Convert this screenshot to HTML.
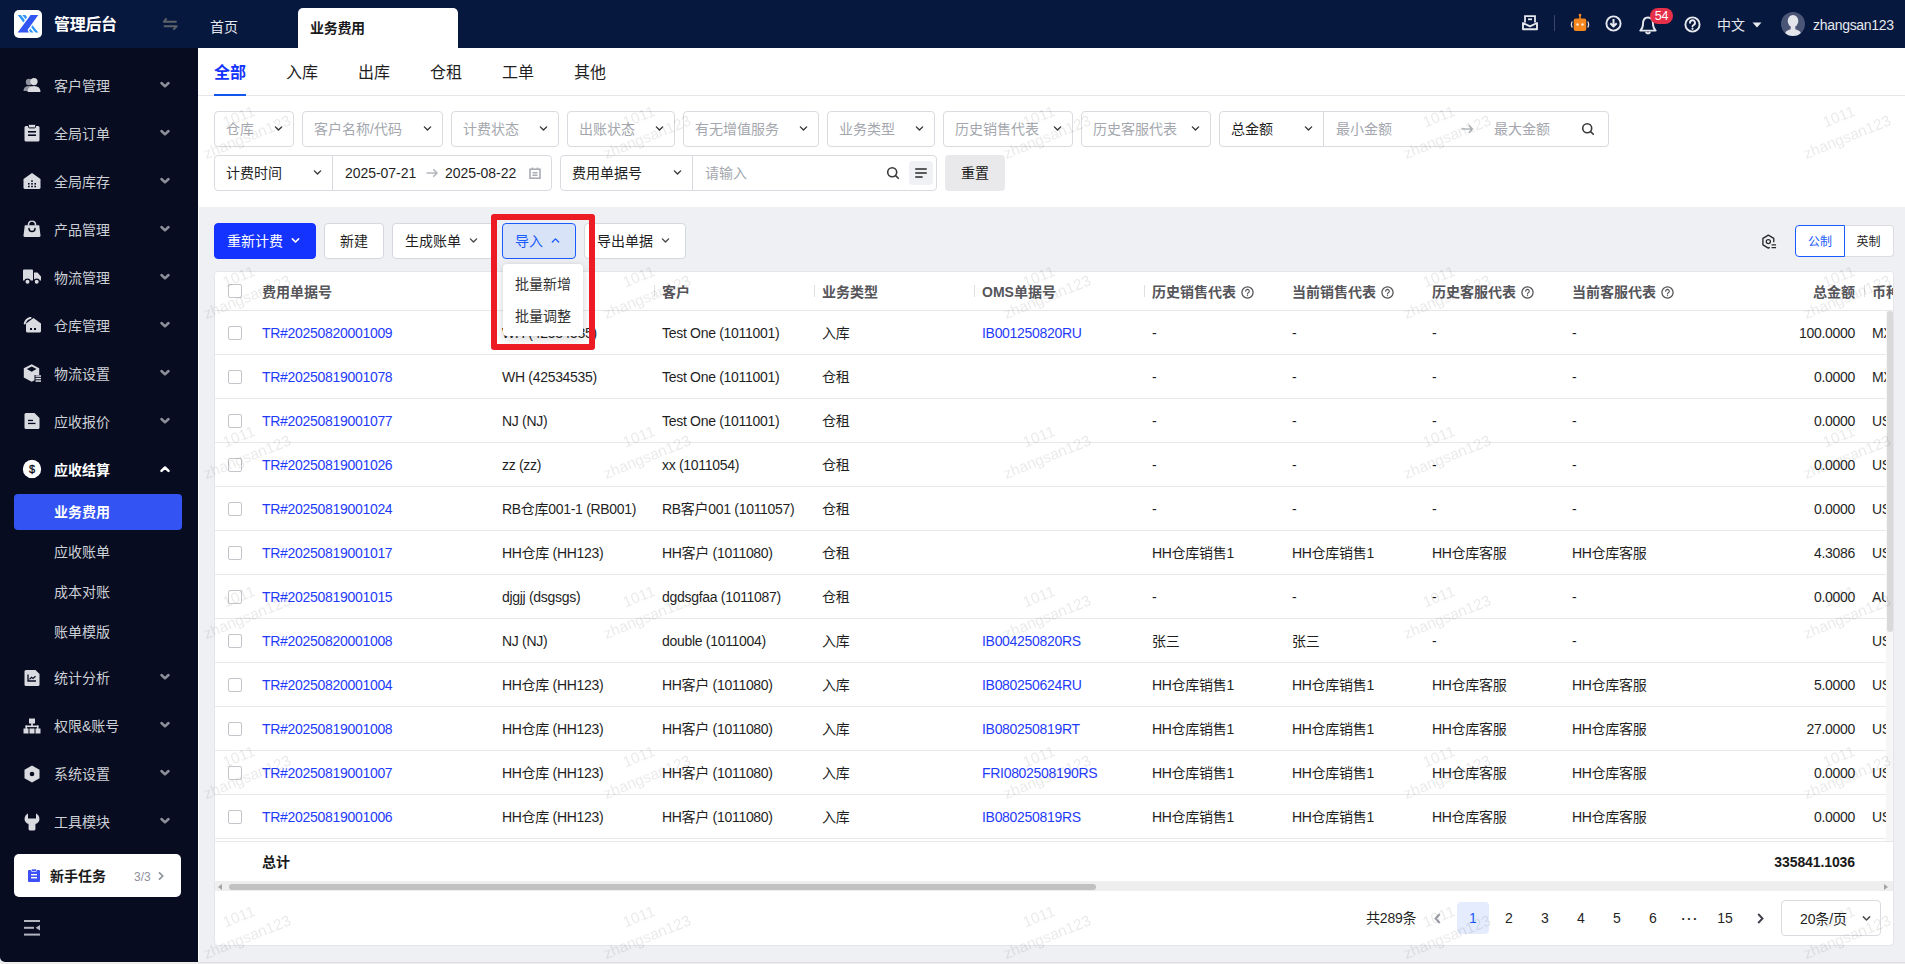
<!DOCTYPE html>
<html lang="zh-CN"><head><meta charset="utf-8"><title>业务费用 - 管理后台</title>
<style>
*{box-sizing:border-box;margin:0;padding:0}
html,body{width:1905px;height:964px;overflow:hidden}
body{position:relative;background:#eff0f4;font-family:"Liberation Sans","Noto Sans CJK SC",sans-serif;font-size:14px;color:#1f1f1f;line-height:1}
.abs{position:absolute}
svg{display:block}
/* header */
#hd{position:absolute;left:0;top:0;width:1905px;height:48px;background:#07183e}
#logo{position:absolute;left:14px;top:10px;width:28px;height:28px;background:#fff;border-radius:5px}
#brand{position:absolute;left:54px;top:15px;font-size:16px;font-weight:bold;color:#fff;line-height:20px;letter-spacing:-0.300px}
.htab{position:absolute;top:16px;height:22px;line-height:22px;font-size:14px;color:#e6e8ee}
#tabact{position:absolute;left:298px;top:8px;width:160px;height:40px;background:#fff;border-radius:5px 5px 0 0}
#tabact span{position:absolute;left:12px;top:9px;line-height:22px;font-weight:bold;color:#1a1a1a;font-size:14px;letter-spacing:-0.300px}
/* sidebar */
#sb{position:absolute;left:0;top:48px;width:198px;height:914px;background:#070c20;border-bottom-left-radius:5px}
.mi{position:absolute;left:0;width:198px;height:24px}
.mi .ic{position:absolute;left:32px;top:11.500px;transform:translate(-50%,-50%)}
.mi .tx{position:absolute;left:54px;top:0;line-height:24px;font-size:14px;color:#cdd0d6;white-space:nowrap}
.mi.on .tx{color:#fff;font-weight:bold}
.mi .ar{position:absolute;left:160px;top:7px}
.smi{position:absolute;left:54px;line-height:24px;height:24px;font-size:14px;color:#cdd0d6}
#smact{position:absolute;left:14px;top:446px;width:168px;height:36px;background:#3353f3;border-radius:4px}
#smact span{position:absolute;left:40px;top:6px;line-height:24px;color:#fff;font-weight:bold;font-size:14px}
#task{position:absolute;left:14px;top:806px;width:167px;height:43px;background:#fff;border-radius:5px}
/* main */
#top{position:absolute;left:198px;top:48px;width:1707px;height:159px;background:#fff}
#tabline{position:absolute;left:0;top:47px;width:1707px;height:1px;background:#e6e7eb}
.stab{position:absolute;top:13px;font-size:16px;line-height:24px;color:#1f1f1f}
.stab.on{color:#1433ff;font-weight:bold}
#ink{position:absolute;left:16px;top:46px;width:32px;height:2px;background:#1456f0}
.sel{position:absolute;height:36px;border:1px solid #d9dbe0;border-radius:4px;background:#fff}
.sel .ph{position:absolute;left:11px;top:0;line-height:34px;color:#a4a7ae;white-space:nowrap;font-size:14px}
.sel .val{position:absolute;left:11px;top:0;line-height:34px;color:#1f1f1f;white-space:nowrap;font-size:14px}
.sel .chev{position:absolute;right:10px;top:12px;color:#333;width:9px;height:9px;margin:0 0.500px}
.btn{position:absolute;height:36px;border:1px solid #d5d8de;border-radius:4px;background:#fff;line-height:34px;font-size:14px;color:#1f1f1f;white-space:nowrap;padding-left:12px}
.btn .chev{position:absolute;top:12px;color:#444;width:9px;height:9px;margin:0 0.500px}
/* table */
#card{position:absolute;left:214px;top:271px;width:1680px;height:675px;background:#fff;border:1px solid #e4e5e9;border-radius:4px;overflow:hidden}
#thd{position:absolute;left:0;top:0;width:1678px;height:39px;overflow:hidden;border-bottom:1px solid #e8e8ec;background:#fff}
#tbl{position:absolute;left:0;top:39px;width:1671px;height:530px;overflow:hidden}
.th{position:absolute;top:0;height:39px;line-height:40px;font-weight:bold;color:#55555a;white-space:nowrap;font-size:14px}
.th .qi{display:inline-block;vertical-align:-2px;margin-left:5px}
.vd{position:absolute;top:13px;width:1px;height:12px;background:#dddee2}
.tr{position:absolute;left:0;width:1671px;height:44px;border-bottom:1px solid #e8e8ec}
.td{position:absolute;top:0;line-height:44px;white-space:nowrap;letter-spacing:-0.300px;color:#1f1f1f}
.td.lk{color:#1f3bfa}
.cb{position:absolute;left:13px;width:14px;height:14px;border:1px solid #c3c5cb;border-radius:2px;background:#fff}
.pg{position:absolute;top:630px;width:32px;height:32px;line-height:32px;text-align:center;font-size:14px;color:#1f1f1f;border-radius:4px}
/* watermark */
#wmk{position:absolute;left:0;top:0;width:1905px;height:964px;overflow:hidden;pointer-events:none;will-change:transform}
.wm{position:absolute;width:160px;height:44px;margin-left:-80px;margin-top:-22px;text-align:center;font-size:15.400px;line-height:22px;color:rgba(0,0,0,0.088);transform:rotate(-22deg);white-space:nowrap;pointer-events:none}
</style></head><body>

<div id="hd">
<div id="logo"><svg width="28" height="28" viewBox="0 0 28 28"><path d="M16.600 5.100 H24.300 L13.500 19.900 L14.900 22.600 H3.700 Z" fill="#3355f3"/><path d="M3.750 5.100 H6.900 L10.900 10.300 L9.400 12.400 Z M8.300 5.100 H11.400 L13.100 7.300 L11.600 9.200 Z M18.500 15.300 L24.300 22.600 H21.300 L17.200 17.300 Z M16.400 18.700 L19.500 22.600 H16.600 L15 20.600 Z" fill="#2f95fb"/></svg></div>
<div id="brand">管理后台</div>
<svg class="abs" style="left:162px;top:16px" width="17" height="16" viewBox="0 0 17 16"><path d="M14.700 5.800 H1.800 L4.600 2.300" fill="none" stroke="#5d6169" stroke-width="2" stroke-linejoin="round"/><path d="M1.800 10.300 H14.700 L11.300 13.600" fill="none" stroke="#5d6169" stroke-width="2" stroke-linejoin="round"/></svg>
<div class="htab" style="left:210px">首页</div>
<div id="tabact"><span>业务费用</span></div>
<svg class="abs" style="left:1521px;top:14px" width="18" height="18" viewBox="0 0 18 18"><path d="M4 8.500 V2.200 H14 V8.500" fill="none" stroke="#e6e8ee" stroke-width="1.800"/><path d="M7 5.300 H11" stroke="#e6e8ee" stroke-width="1.800"/><path d="M2 9 V15.300 H16 V9 L9 12.300 Z" fill="none" stroke="#e6e8ee" stroke-width="1.900" stroke-linejoin="round"/></svg>
<div class="abs" style="left:1554px;top:15px;width:1px;height:16px;background:#3a4665"></div>
<svg class="abs" style="left:1570px;top:13px" width="20" height="19" viewBox="0 0 20 19"><rect x="9.200" y="1.500" width="1.600" height="4.500" fill="#f5871f"/><circle cx="10" cy="2" r="1.300" fill="#f5871f"/><rect x="3.700" y="5.500" width="12.600" height="12.500" rx="2" fill="#f5871f"/><path d="M2.300 8.500 Q0.500 11.500 2.300 14.500 M17.700 8.500 Q19.500 11.500 17.700 14.500" fill="none" stroke="#e9e2dc" stroke-width="1.300"/><circle cx="7.500" cy="11.500" r="1.200" fill="#f7ede2"/><circle cx="12.500" cy="11.500" r="1.200" fill="#f7ede2"/></svg>
<svg class="abs" style="left:1605px;top:15px" width="17" height="17" viewBox="0 0 17 17"><circle cx="8.500" cy="8.500" r="7.100" fill="none" stroke="#e6e8ee" stroke-width="1.900"/><path d="M8.500 4 V11 M5.300 8.300 L8.500 11.500 L11.700 8.300" fill="none" stroke="#e6e8ee" stroke-width="2" stroke-linejoin="round"/></svg>
<svg class="abs" style="left:1639px;top:16px" width="18" height="19" viewBox="0 0 18 19"><path d="M9 1.500 C5 1.500 4 5 4 8 C4 11 3 13 1.300 14.600 H16.700 C15 13 14 11 14 8 C14 5 13 1.500 9 1.500 Z" fill="none" stroke="#e6e8ee" stroke-width="1.900" stroke-linejoin="round"/><path d="M7.200 16.500 Q9 18.300 10.800 16.500" fill="none" stroke="#e6e8ee" stroke-width="1.800" stroke-linecap="round"/></svg>
<div class="abs" style="left:1650px;top:8px;width:23px;height:16px;border-radius:8px;background:#e6304a;color:#fff;font-size:12.500px;line-height:16px;text-align:center;letter-spacing:-0.300px">54</div>
<svg class="abs" style="left:1684px;top:16px" width="17" height="17" viewBox="0 0 17 17"><circle cx="8.500" cy="8.500" r="7.100" fill="none" stroke="#e6e8ee" stroke-width="1.900"/><path d="M6 6.800 a2.500 2.500 0 1 1 3.600 2.200 q-1.100 0.600 -1.100 1.600" fill="none" stroke="#e6e8ee" stroke-width="1.900" stroke-linecap="round"/><circle cx="8.500" cy="12.800" r="1.100" fill="#e6e8ee"/></svg>
<div class="abs" style="left:1717px;top:14px;line-height:22px;color:#e6e8ee;font-size:14px">中文</div>
<svg class="abs" style="left:1752px;top:22px" width="10" height="6" viewBox="0 0 10 6"><path d="M0.500 0.500 H9.500 L5 5.500 Z" fill="#e6e8ee"/></svg>
<svg class="abs" style="left:1781px;top:12px" width="24" height="24" viewBox="0 0 24 24"><defs><clipPath id="avc"><circle cx="12" cy="12" r="12"/></clipPath></defs><circle cx="12" cy="12" r="12" fill="#4b5677"/><g clip-path="url(#avc)"><ellipse cx="12" cy="9" rx="5.300" ry="6" fill="#e3e5ea"/><rect x="9.700" y="13" width="4.600" height="6" fill="#e3e5ea"/><path d="M3.500 24 Q3.500 18.600 9.700 17.300 L14.300 17.300 Q20.500 18.600 20.500 24 Z" fill="#e3e5ea"/></g></svg>
<div class="abs" style="left:1813px;top:14px;line-height:22px;color:#e6e8ee;font-size:14px;letter-spacing:-0.300px">zhangsan123</div>
</div>
<div id="sb">
<div class="mi" style="top:25.5px"><div class="ic"><svg width="18" height="16" viewBox="0 0 18 16"><circle cx="6" cy="5" r="3.2" fill="#8f939d"/><path d="M0.5 14 q0 -5 5.5 -5 q5.5 0 5.5 5 z" fill="#8f939d"/><circle cx="11" cy="4.6" r="3.6" fill="#d9dbe0"/><path d="M4.5 15 q0 -6 6.5 -6 q6.500 0 6.500 6 z" fill="#d9dbe0"/></svg></div><div class="tx">客户管理</div><div class="ar"><svg width="10" height="8" viewBox="0 0 10 8"><path d="M1.500 2 L5 5.300 L8.500 2" fill="none" stroke="#8d909b" stroke-width="2.500" stroke-linecap="round" stroke-linejoin="round"/></svg></div></div>
<div class="mi" style="top:73.5px"><div class="ic"><svg width="16" height="18" viewBox="0 0 16 18"><rect x="0.500" y="2" width="15" height="15.5" rx="1.5" fill="#d9dbe0"/><rect x="4.5" y="0.3" width="7" height="3.6" rx="1" fill="#d9dbe0" stroke="#070c20" stroke-width="1"/><rect x="4" y="7" width="8" height="1.6" fill="#070c20"/><rect x="4" y="10.400" width="8" height="1.6" fill="#070c20"/></svg></div><div class="tx">全局订单</div><div class="ar"><svg width="10" height="8" viewBox="0 0 10 8"><path d="M1.500 2 L5 5.300 L8.500 2" fill="none" stroke="#8d909b" stroke-width="2.500" stroke-linecap="round" stroke-linejoin="round"/></svg></div></div>
<div class="mi" style="top:121.5px"><div class="ic"><svg width="18" height="17" viewBox="0 0 18 17"><path d="M9 0.5 L17.500 6.5 V15 q0 1.5 -1.5 1.5 H2 q-1.5 0 -1.5 -1.5 V6.5 Z" fill="#d9dbe0"/><g fill="#070c20"><rect x="5" y="10.5" width="1.6" height="1.6"/><rect x="8.2" y="10.5" width="1.6" height="1.6"/><rect x="11.4" y="10.5" width="1.6" height="1.6"/><rect x="5" y="13.2" width="1.6" height="1.6"/><rect x="8.2" y="13.2" width="1.6" height="1.6"/><rect x="11.4" y="13.2" width="1.6" height="1.6"/><rect x="8.2" y="7.800" width="1.6" height="1.6"/></g></svg></div><div class="tx">全局库存</div><div class="ar"><svg width="10" height="8" viewBox="0 0 10 8"><path d="M1.500 2 L5 5.300 L8.500 2" fill="none" stroke="#8d909b" stroke-width="2.500" stroke-linecap="round" stroke-linejoin="round"/></svg></div></div>
<div class="mi" style="top:169.5px"><div class="ic"><svg width="18" height="17" viewBox="0 0 18 17"><path d="M5.500 5 V4 a3.500 3.500 0 0 1 7 0 V5" fill="none" stroke="#d9dbe0" stroke-width="1.6"/><path d="M1.800 4.800 H16.200 L17.500 15 q0.100 1.500 -1.400 1.500 H1.900 q-1.500 0 -1.400 -1.500 Z" fill="#d9dbe0"/><path d="M6 8 a3 3 0 0 0 6 0" fill="none" stroke="#070c20" stroke-width="1.500" stroke-linecap="round"/></svg></div><div class="tx">产品管理</div><div class="ar"><svg width="10" height="8" viewBox="0 0 10 8"><path d="M1.500 2 L5 5.300 L8.500 2" fill="none" stroke="#8d909b" stroke-width="2.500" stroke-linecap="round" stroke-linejoin="round"/></svg></div></div>
<div class="mi" style="top:217.5px"><div class="ic"><svg width="19" height="16" viewBox="0 0 19 16"><path d="M0.500 1.500 q0 -1 1 -1 H9.500 q1 0 1 1 V11.500 H0.500 Z" fill="#d9dbe0"/><path d="M11.500 3.500 H15 L18.500 7.500 V11.500 H11.500 Z" fill="#d9dbe0"/><circle cx="5" cy="12.800" r="2.600" fill="#d9dbe0" stroke="#070c20" stroke-width="1.200"/><circle cx="14.200" cy="12.800" r="2.600" fill="#d9dbe0" stroke="#070c20" stroke-width="1.200"/></svg></div><div class="tx">物流管理</div><div class="ar"><svg width="10" height="8" viewBox="0 0 10 8"><path d="M1.500 2 L5 5.300 L8.500 2" fill="none" stroke="#8d909b" stroke-width="2.500" stroke-linecap="round" stroke-linejoin="round"/></svg></div></div>
<div class="mi" style="top:265.5px"><div class="ic"><svg width="19" height="16" viewBox="0 0 19 16"><path d="M2.200 6.500 A 8 8 0 0 1 8 0.800" fill="none" stroke="#d9dbe0" stroke-width="2" stroke-linecap="round"/><path d="M11 1 L18.500 6.500 V14 q0 1.500 -1.500 1.500 H5 q-1.500 0 -1.500 -1.500 V6.500 Z" fill="#d9dbe0"/><rect x="7.500" y="11" width="2" height="2" fill="#070c20"/><rect x="11.500" y="11" width="2" height="2" fill="#070c20"/></svg></div><div class="tx">仓库管理</div><div class="ar"><svg width="10" height="8" viewBox="0 0 10 8"><path d="M1.500 2 L5 5.300 L8.500 2" fill="none" stroke="#8d909b" stroke-width="2.500" stroke-linecap="round" stroke-linejoin="round"/></svg></div></div>
<div class="mi" style="top:313.5px"><div class="ic"><svg width="18" height="18" viewBox="0 0 18 18"><path d="M8.700 0.300 L16.200 4.300 V11 H11.500 V16.300 L8.700 17.700 L0.800 13.500 V4.300 Z" fill="#d9dbe0"/><path d="M8.700 2.600 L13.500 5.100 L8.700 7.700 L3.900 5.100 Z" fill="#070c20"/><rect x="12.500" y="11.300" width="5.500" height="1.500" fill="#d9dbe0"/><rect x="12.500" y="13.800" width="5.500" height="1.500" fill="#d9dbe0"/><rect x="12.500" y="16.300" width="5.500" height="1.500" fill="#d9dbe0"/></svg></div><div class="tx">物流设置</div><div class="ar"><svg width="10" height="8" viewBox="0 0 10 8"><path d="M1.500 2 L5 5.300 L8.500 2" fill="none" stroke="#8d909b" stroke-width="2.500" stroke-linecap="round" stroke-linejoin="round"/></svg></div></div>
<div class="mi" style="top:361.5px"><div class="ic"><svg width="16" height="17" viewBox="0 0 16 17"><path d="M2 0.500 H10.500 L15.500 5.500 V15 q0 1.500 -1.500 1.500 H2 q-1.500 0 -1.500 -1.500 V2 q0 -1.500 1.500 -1.500 Z" fill="#d9dbe0"/><rect x="4" y="7.300" width="5" height="1.300" fill="#070c20"/><rect x="4" y="10.300" width="7.500" height="1.300" fill="#070c20"/></svg></div><div class="tx">应收报价</div><div class="ar"><svg width="10" height="8" viewBox="0 0 10 8"><path d="M1.500 2 L5 5.300 L8.500 2" fill="none" stroke="#8d909b" stroke-width="2.500" stroke-linecap="round" stroke-linejoin="round"/></svg></div></div>
<div class="mi on" style="top:409.5px"><div class="ic"><svg width="19" height="19" viewBox="0 0 19 19"><circle cx="9.500" cy="9.500" r="9.200" fill="#fff"/><text x="9.500" y="13.300" font-size="11" text-anchor="middle" fill="#070c20" stroke="#070c20" stroke-width="0.300" font-family="Liberation Sans, sans-serif">$</text></svg></div><div class="tx">应收结算</div><div class="ar"><svg width="10" height="8" viewBox="0 0 10 8"><path d="M1.500 5.800 L5 2.500 L8.500 5.800" fill="none" stroke="#fff" stroke-width="2.500" stroke-linecap="round" stroke-linejoin="round"/></svg></div></div>
<div class="mi" style="top:618px"><div class="ic"><svg width="16" height="17" viewBox="0 0 16 17"><path d="M2 0.500 H11.500 L15.500 4.500 V15 q0 1.500 -1.500 1.500 H2 q-1.500 0 -1.500 -1.500 V2 q0 -1.500 1.500 -1.500 Z" fill="#d9dbe0"/><path d="M4 5 V11.500 H12" fill="none" stroke="#070c20" stroke-width="1.300"/><path d="M5.500 9.800 L7.500 7.800 L9 9 L11.500 6.800" fill="none" stroke="#070c20" stroke-width="1.200"/></svg></div><div class="tx">统计分析</div><div class="ar"><svg width="10" height="8" viewBox="0 0 10 8"><path d="M1.500 2 L5 5.300 L8.500 2" fill="none" stroke="#8d909b" stroke-width="2.500" stroke-linecap="round" stroke-linejoin="round"/></svg></div></div>
<div class="mi" style="top:666px"><div class="ic"><svg width="18" height="16" viewBox="0 0 18 16"><rect x="6" y="0.500" width="6" height="5" fill="#d9dbe0"/><rect x="8.200" y="5" width="1.600" height="4" fill="#d9dbe0"/><rect x="2.500" y="7.500" width="13" height="1.600" fill="#d9dbe0"/><rect x="2.500" y="7.500" width="1.600" height="3.500" fill="#d9dbe0"/><rect x="13.900" y="7.500" width="1.600" height="3.500" fill="#d9dbe0"/><rect x="0.500" y="10.500" width="5" height="5" fill="#d9dbe0"/><rect x="6.500" y="10.500" width="5" height="5" fill="#d9dbe0"/><rect x="12.500" y="10.500" width="5" height="5" fill="#d9dbe0"/></svg></div><div class="tx">权限&amp;账号</div><div class="ar"><svg width="10" height="8" viewBox="0 0 10 8"><path d="M1.500 2 L5 5.300 L8.500 2" fill="none" stroke="#8d909b" stroke-width="2.500" stroke-linecap="round" stroke-linejoin="round"/></svg></div></div>
<div class="mi" style="top:714px"><div class="ic"><svg width="16" height="18" viewBox="0 0 16 18"><path d="M8 0.500 L15.500 4.700 V13.300 L8 17.500 L0.500 13.300 V4.700 Z" fill="#d9dbe0"/><circle cx="8" cy="9" r="2.300" fill="#070c20"/></svg></div><div class="tx">系统设置</div><div class="ar"><svg width="10" height="8" viewBox="0 0 10 8"><path d="M1.500 2 L5 5.300 L8.500 2" fill="none" stroke="#8d909b" stroke-width="2.500" stroke-linecap="round" stroke-linejoin="round"/></svg></div></div>
<div class="mi" style="top:762px"><div class="ic"><svg width="16" height="18" viewBox="0 0 14 18" preserveAspectRatio="none"><path d="M3.500 0.500 V5.500 H10.500 V0.500 Q13.500 2 13.500 6 Q13.500 9.500 10 11 V16 q0 1.500 -1.500 1.500 H5.500 q-1.500 0 -1.500 -1.500 V11 Q0.500 9.500 0.500 6 Q0.500 2 3.500 0.500 Z" fill="#d9dbe0"/></svg></div><div class="tx">工具模块</div><div class="ar"><svg width="10" height="8" viewBox="0 0 10 8"><path d="M1.500 2 L5 5.300 L8.500 2" fill="none" stroke="#8d909b" stroke-width="2.500" stroke-linecap="round" stroke-linejoin="round"/></svg></div></div>
<div id="smact"><span>业务费用</span></div>
<div class="smi" style="top:492px">应收账单</div>
<div class="smi" style="top:532px">成本对账</div>
<div class="smi" style="top:572px">账单模版</div>
<div id="task"><svg class="abs" style="left:14px;top:15px" width="12" height="13" viewBox="0 0 12 13"><rect x="0" y="1" width="12" height="12" rx="1" fill="#3c50f5"/><rect x="3.500" y="0" width="5" height="2.500" rx="0.600" fill="#3c50f5" stroke="#fff" stroke-width="0.700"/><rect x="3" y="5" width="6" height="1.400" fill="#fff"/><rect x="3" y="8" width="6" height="1.400" fill="#fff"/></svg><div class="abs" style="left:36px;top:10px;line-height:24px;font-weight:bold;color:#1a1a1a;font-size:14px">新手任务</div><div class="abs" style="left:120px;top:11px;line-height:24px;font-size:12px;color:#8e909a">3/3</div><svg class="abs" style="left:144px;top:17px" width="6" height="10" viewBox="0 0 6 10"><path d="M1 1.300 L4.700 5 L1 8.700" fill="none" stroke="#8e909a" stroke-width="1.700"/></svg></div>
<svg class="abs" style="left:24px;top:872px" width="17" height="16" viewBox="0 0 17 16"><rect x="0" y="0" width="16" height="2" fill="#b3b6c0"/><rect x="0" y="6.800" width="10" height="2" fill="#b3b6c0"/><rect x="0" y="13.600" width="16" height="2" fill="#b3b6c0"/><path d="M16 5 V10.600 L11.500 7.800 Z" fill="#b3b6c0"/></svg>
</div>
<div class="abs" style="left:198px;top:207px;width:1px;height:755px;background:#fff"></div>
<div class="abs" style="left:0;top:962px;width:1905px;height:2px;background:#ededee"></div>
<div class="abs" style="left:198px;top:962px;width:1707px;height:1px;background:#dedee0"></div>
<div id="top">
<div class="stab on" style="left:16px">全部</div>
<div class="stab" style="left:88px">入库</div>
<div class="stab" style="left:160px">出库</div>
<div class="stab" style="left:232px">仓租</div>
<div class="stab" style="left:304px">工单</div>
<div class="stab" style="left:376px">其他</div>
<div id="tabline"></div><div id="ink"></div>
<div class="sel" style="left:16px;top:63px;width:80px"><span class="ph">仓库</span><svg class="chev" width="10" height="10" viewBox="0 0 10 10"><path d="M1.5 3.2 L5 6.7 L8.5 3.2" fill="none" stroke="currentColor" stroke-width="1.5" stroke-linecap="round" stroke-linejoin="round"/></svg></div>
<div class="sel" style="left:104px;top:63px;width:141px"><span class="ph">客户名称/代码</span><svg class="chev" width="10" height="10" viewBox="0 0 10 10"><path d="M1.5 3.2 L5 6.7 L8.5 3.2" fill="none" stroke="currentColor" stroke-width="1.5" stroke-linecap="round" stroke-linejoin="round"/></svg></div>
<div class="sel" style="left:253px;top:63px;width:108px"><span class="ph">计费状态</span><svg class="chev" width="10" height="10" viewBox="0 0 10 10"><path d="M1.5 3.2 L5 6.7 L8.5 3.2" fill="none" stroke="currentColor" stroke-width="1.5" stroke-linecap="round" stroke-linejoin="round"/></svg></div>
<div class="sel" style="left:369px;top:63px;width:108px"><span class="ph">出账状态</span><svg class="chev" width="10" height="10" viewBox="0 0 10 10"><path d="M1.5 3.2 L5 6.7 L8.5 3.2" fill="none" stroke="currentColor" stroke-width="1.5" stroke-linecap="round" stroke-linejoin="round"/></svg></div>
<div class="sel" style="left:485px;top:63px;width:136px"><span class="ph">有无增值服务</span><svg class="chev" width="10" height="10" viewBox="0 0 10 10"><path d="M1.5 3.2 L5 6.7 L8.5 3.2" fill="none" stroke="currentColor" stroke-width="1.5" stroke-linecap="round" stroke-linejoin="round"/></svg></div>
<div class="sel" style="left:629px;top:63px;width:108px"><span class="ph">业务类型</span><svg class="chev" width="10" height="10" viewBox="0 0 10 10"><path d="M1.5 3.2 L5 6.7 L8.5 3.2" fill="none" stroke="currentColor" stroke-width="1.5" stroke-linecap="round" stroke-linejoin="round"/></svg></div>
<div class="sel" style="left:745px;top:63px;width:130px"><span class="ph">历史销售代表</span><svg class="chev" width="10" height="10" viewBox="0 0 10 10"><path d="M1.5 3.2 L5 6.7 L8.5 3.2" fill="none" stroke="currentColor" stroke-width="1.5" stroke-linecap="round" stroke-linejoin="round"/></svg></div>
<div class="sel" style="left:883px;top:63px;width:130px"><span class="ph">历史客服代表</span><svg class="chev" width="10" height="10" viewBox="0 0 10 10"><path d="M1.5 3.2 L5 6.7 L8.5 3.2" fill="none" stroke="currentColor" stroke-width="1.5" stroke-linecap="round" stroke-linejoin="round"/></svg></div>
<div class="sel" style="left:1021px;top:63px;width:390px"><span class="val">总金额</span><svg class="chev" style="left:83px;right:auto" width="10" height="10" viewBox="0 0 10 10"><path d="M1.500 3.200 L5 6.700 L8.500 3.200" fill="none" stroke="currentColor" stroke-width="1.500" stroke-linecap="round" stroke-linejoin="round"/></svg><div class="abs" style="left:103px;top:0;width:1px;height:34px;background:#d9dbe0"></div><span class="ph" style="left:116px">最小金额</span><svg class="abs" style="left:240px;top:11px" width="14" height="12" viewBox="0 0 14 12"><path d="M1.500 6 H12.500 M8.700 2.200 L12.500 6 L8.700 9.800" fill="none" stroke="#b4b7bd" stroke-width="1.600"/></svg><span class="ph" style="left:274px">最大金额</span><div class="abs" style="left:361px;top:10px"><svg width="14" height="14" viewBox="0 0 14 14"><circle cx="6.200" cy="6.200" r="4.500" fill="none" stroke="#3a3a3a" stroke-width="1.600"/><path d="M9.600 9.600 L12.300 12.300" stroke="#3a3a3a" stroke-width="1.600" stroke-linecap="round"/></svg></div></div>
<div class="sel" style="left:16px;top:107px;width:338px"><span class="val">计费时间</span><svg class="chev" style="left:97px;right:auto" width="10" height="10" viewBox="0 0 10 10"><path d="M1.500 3.200 L5 6.700 L8.500 3.200" fill="none" stroke="currentColor" stroke-width="1.500" stroke-linecap="round" stroke-linejoin="round"/></svg><div class="abs" style="left:117px;top:0;width:1px;height:34px;background:#d9dbe0"></div><span class="val" style="left:130px;letter-spacing:-0.050px">2025-07-21</span><svg class="abs" style="left:210px;top:11px" width="14" height="12" viewBox="0 0 14 12"><path d="M1.500 6 H12 M8.300 2.300 L12 6 L8.300 9.700" fill="none" stroke="#b4b7bd" stroke-width="1.600"/></svg><span class="val" style="left:230px;letter-spacing:-0.050px">2025-08-22</span><svg class="abs" style="left:314px;top:11px" width="12" height="12" viewBox="0 0 12 12"><rect x="1" y="2.200" width="10" height="9" fill="none" stroke="#a9acb5" stroke-width="1.600"/><path d="M3.500 0.500 V3 M8.500 0.500 V3 M3.500 5.800 H8.500 M3.500 8.300 H8.500" stroke="#a9acb5" stroke-width="1.400"/></svg></div>
<div class="sel" style="left:362px;top:107px;width:377px"><span class="val">费用单据号</span><svg class="chev" style="left:111px;right:auto" width="10" height="10" viewBox="0 0 10 10"><path d="M1.500 3.200 L5 6.700 L8.500 3.200" fill="none" stroke="currentColor" stroke-width="1.500" stroke-linecap="round" stroke-linejoin="round"/></svg><div class="abs" style="left:131px;top:0;width:1px;height:34px;background:#d9dbe0"></div><span class="ph" style="left:144px">请输入</span><div class="abs" style="left:325px;top:10px"><svg width="14" height="14" viewBox="0 0 14 14"><circle cx="6.200" cy="6.200" r="4.500" fill="none" stroke="#3a3a3a" stroke-width="1.600"/><path d="M9.600 9.600 L12.300 12.300" stroke="#3a3a3a" stroke-width="1.600" stroke-linecap="round"/></svg></div><div class="abs" style="left:348px;top:5px;width:24px;height:24px;border-radius:4px;background:#f0f1f4"><svg style="margin:7px 0 0 6px" width="12" height="10" viewBox="0 0 12 10"><path d="M0.800 1 H11.200 M0.800 5 H11.200 M0.800 9 H7" stroke="#2a2a2a" stroke-width="1.700" stroke-linecap="round"/></svg></div></div>
<div class="abs" style="left:747px;top:107px;width:60px;height:36px;border-radius:4px;background:#e9e9eb;line-height:36px;text-align:center;font-size:14px;color:#1a1a1a">重置</div>
</div>
<div class="btn" style="left:214px;top:223px;width:102px;background:#1433ff;border-color:#1433ff;color:#fff">重新计费<svg class="chev" style="left:75px;color:#fff" width="10" height="10" viewBox="0 0 10 10"><path d="M1.500 3.200 L5 6.700 L8.500 3.200" fill="none" stroke="currentColor" stroke-width="1.800" stroke-linecap="round" stroke-linejoin="round"/></svg></div>
<div class="btn" style="left:324px;top:223px;width:60px;padding-left:15px">新建</div>
<div class="btn" style="left:392px;top:223px;width:102px">生成账单<svg class="chev" style="left:75px;right:auto" width="10" height="10" viewBox="0 0 10 10"><path d="M1.500 3.200 L5 6.700 L8.500 3.200" fill="none" stroke="currentColor" stroke-width="1.500" stroke-linecap="round" stroke-linejoin="round"/></svg></div>
<div class="btn" style="left:502px;top:223px;width:74px;background:#d9e3f7;border-color:#1a5bff;color:#1a5bff">导入<svg class="chev" style="left:47px;color:#1a5bff" width="10" height="10" viewBox="0 0 10 10"><path d="M1.500 6.700 L5 3.200 L8.500 6.700" fill="none" stroke="currentColor" stroke-width="1.500" stroke-linecap="round" stroke-linejoin="round"/></svg></div>
<div class="btn" style="left:584px;top:223px;width:102px">导出单据<svg class="chev" style="left:75px;right:auto" width="10" height="10" viewBox="0 0 10 10"><path d="M1.500 3.200 L5 6.700 L8.500 3.200" fill="none" stroke="currentColor" stroke-width="1.500" stroke-linecap="round" stroke-linejoin="round"/></svg></div>
<svg class="abs" style="left:1762px;top:234px" width="14.500" height="15.400" viewBox="0 0 16 17"><path d="M13 9 V4.800 L7 1.200 L1 4.800 V12 L7 15.600 L8.500 14.700" fill="none" stroke="#2a2a2a" stroke-width="1.500" stroke-linejoin="round"/><circle cx="7" cy="8.400" r="2.300" fill="none" stroke="#2a2a2a" stroke-width="1.400"/><path d="M10.500 12 H15.500 M10.500 15 H15.500" stroke="#2a2a2a" stroke-width="1.400"/></svg>
<div class="abs" style="left:1844px;top:225px;width:50px;height:32px;border:1px solid #dcdde2;border-left:none;border-radius:0 4px 4px 0;background:#fff;line-height:32px;text-align:center;font-size:12px;color:#1f1f1f">英制</div>
<div class="abs" style="left:1795px;top:225px;width:50px;height:32px;border:1px solid #1a5bff;border-radius:4px 0 0 4px;background:#fff;line-height:32px;text-align:center;font-size:12px;color:#1a5bff">公制</div>
<div id="card"><div id="thd">
<div class="cb" style="top:12px"></div>
<div class="th" style="left:47px">费用单据号</div>
<div class="th" style="left:290px">仓库</div>
<div class="th" style="left:447px">客户</div>
<div class="th" style="left:607px">业务类型</div>
<div class="th" style="left:767px">OMS单据号</div>
<div class="th" style="left:937px">历史销售代表<svg class="qi" width="13" height="13" viewBox="0 0 13 13"><circle cx="6.5" cy="6.5" r="5.6" fill="none" stroke="#55555a" stroke-width="1.3"/><path d="M4.7 5.2 a1.8 1.8 0 1 1 2.6 1.6 q-0.8 0.4 -0.8 1.2" fill="none" stroke="#55555a" stroke-width="1.1" stroke-linecap="round"/><circle cx="6.5" cy="9.6" r="0.7" fill="#55555a"/></svg></div>
<div class="th" style="left:1077px">当前销售代表<svg class="qi" width="13" height="13" viewBox="0 0 13 13"><circle cx="6.5" cy="6.5" r="5.6" fill="none" stroke="#55555a" stroke-width="1.3"/><path d="M4.7 5.2 a1.8 1.8 0 1 1 2.6 1.6 q-0.8 0.4 -0.8 1.2" fill="none" stroke="#55555a" stroke-width="1.1" stroke-linecap="round"/><circle cx="6.5" cy="9.6" r="0.7" fill="#55555a"/></svg></div>
<div class="th" style="left:1217px">历史客服代表<svg class="qi" width="13" height="13" viewBox="0 0 13 13"><circle cx="6.5" cy="6.5" r="5.6" fill="none" stroke="#55555a" stroke-width="1.3"/><path d="M4.7 5.2 a1.8 1.8 0 1 1 2.6 1.6 q-0.8 0.4 -0.8 1.2" fill="none" stroke="#55555a" stroke-width="1.1" stroke-linecap="round"/><circle cx="6.5" cy="9.6" r="0.7" fill="#55555a"/></svg></div>
<div class="th" style="left:1357px">当前客服代表<svg class="qi" width="13" height="13" viewBox="0 0 13 13"><circle cx="6.5" cy="6.5" r="5.6" fill="none" stroke="#55555a" stroke-width="1.3"/><path d="M4.7 5.2 a1.8 1.8 0 1 1 2.6 1.6 q-0.8 0.4 -0.8 1.2" fill="none" stroke="#55555a" stroke-width="1.1" stroke-linecap="round"/><circle cx="6.5" cy="9.6" r="0.7" fill="#55555a"/></svg></div>
<div class="th" style="left:1657px">币种</div>
<div class="th" style="left:1540px;width:100px;text-align:right">总金额</div>
<div class="vd" style="left:279px"></div>
<div class="vd" style="left:439px"></div>
<div class="vd" style="left:599px"></div>
<div class="vd" style="left:759px"></div>
<div class="vd" style="left:929px"></div>
<div class="vd" style="left:1649px"></div>
</div><div id="tbl">
<div class="tr" style="top:0px"><div class="cb" style="top:15px"></div>
<div class="td lk" style="left:47px">TR#20250820001009</div>
<div class="td" style="left:287px">WH (42534535)</div>
<div class="td" style="left:447px">Test One (1011001)</div>
<div class="td" style="left:607px">入库</div>
<div class="td lk" style="left:767px">IB001250820RU</div>
<div class="td" style="left:937px">-</div>
<div class="td" style="left:1077px">-</div>
<div class="td" style="left:1217px">-</div>
<div class="td" style="left:1357px">-</div>
<div class="td" style="left:1540px;width:100px;text-align:right">100.0000</div>
<div class="td" style="left:1657px">MXN</div></div>
<div class="tr" style="top:44px"><div class="cb" style="top:15px"></div>
<div class="td lk" style="left:47px">TR#20250819001078</div>
<div class="td" style="left:287px">WH (42534535)</div>
<div class="td" style="left:447px">Test One (1011001)</div>
<div class="td" style="left:607px">仓租</div>
<div class="td" style="left:937px">-</div>
<div class="td" style="left:1077px">-</div>
<div class="td" style="left:1217px">-</div>
<div class="td" style="left:1357px">-</div>
<div class="td" style="left:1540px;width:100px;text-align:right">0.0000</div>
<div class="td" style="left:1657px">MXN</div></div>
<div class="tr" style="top:88px"><div class="cb" style="top:15px"></div>
<div class="td lk" style="left:47px">TR#20250819001077</div>
<div class="td" style="left:287px">NJ (NJ)</div>
<div class="td" style="left:447px">Test One (1011001)</div>
<div class="td" style="left:607px">仓租</div>
<div class="td" style="left:937px">-</div>
<div class="td" style="left:1077px">-</div>
<div class="td" style="left:1217px">-</div>
<div class="td" style="left:1357px">-</div>
<div class="td" style="left:1540px;width:100px;text-align:right">0.0000</div>
<div class="td" style="left:1657px">USD</div></div>
<div class="tr" style="top:132px"><div class="cb" style="top:15px"></div>
<div class="td lk" style="left:47px">TR#20250819001026</div>
<div class="td" style="left:287px">zz (zz)</div>
<div class="td" style="left:447px">xx (1011054)</div>
<div class="td" style="left:607px">仓租</div>
<div class="td" style="left:937px">-</div>
<div class="td" style="left:1077px">-</div>
<div class="td" style="left:1217px">-</div>
<div class="td" style="left:1357px">-</div>
<div class="td" style="left:1540px;width:100px;text-align:right">0.0000</div>
<div class="td" style="left:1657px">USD</div></div>
<div class="tr" style="top:176px"><div class="cb" style="top:15px"></div>
<div class="td lk" style="left:47px">TR#20250819001024</div>
<div class="td" style="left:287px">RB仓库001-1 (RB001)</div>
<div class="td" style="left:447px">RB客户001 (1011057)</div>
<div class="td" style="left:607px">仓租</div>
<div class="td" style="left:937px">-</div>
<div class="td" style="left:1077px">-</div>
<div class="td" style="left:1217px">-</div>
<div class="td" style="left:1357px">-</div>
<div class="td" style="left:1540px;width:100px;text-align:right">0.0000</div>
<div class="td" style="left:1657px">USD</div></div>
<div class="tr" style="top:220px"><div class="cb" style="top:15px"></div>
<div class="td lk" style="left:47px">TR#20250819001017</div>
<div class="td" style="left:287px">HH仓库 (HH123)</div>
<div class="td" style="left:447px">HH客户 (1011080)</div>
<div class="td" style="left:607px">仓租</div>
<div class="td" style="left:937px">HH仓库销售1</div>
<div class="td" style="left:1077px">HH仓库销售1</div>
<div class="td" style="left:1217px">HH仓库客服</div>
<div class="td" style="left:1357px">HH仓库客服</div>
<div class="td" style="left:1540px;width:100px;text-align:right">4.3086</div>
<div class="td" style="left:1657px">USD</div></div>
<div class="tr" style="top:264px"><div class="cb" style="top:15px"></div>
<div class="td lk" style="left:47px">TR#20250819001015</div>
<div class="td" style="left:287px">djgjj (dsgsgs)</div>
<div class="td" style="left:447px">dgdsgfaa (1011087)</div>
<div class="td" style="left:607px">仓租</div>
<div class="td" style="left:937px">-</div>
<div class="td" style="left:1077px">-</div>
<div class="td" style="left:1217px">-</div>
<div class="td" style="left:1357px">-</div>
<div class="td" style="left:1540px;width:100px;text-align:right">0.0000</div>
<div class="td" style="left:1657px">AUD</div></div>
<div class="tr" style="top:308px"><div class="cb" style="top:15px"></div>
<div class="td lk" style="left:47px">TR#20250820001008</div>
<div class="td" style="left:287px">NJ (NJ)</div>
<div class="td" style="left:447px">double (1011004)</div>
<div class="td" style="left:607px">入库</div>
<div class="td lk" style="left:767px">IB004250820RS</div>
<div class="td" style="left:937px">张三</div>
<div class="td" style="left:1077px">张三</div>
<div class="td" style="left:1217px">-</div>
<div class="td" style="left:1357px">-</div>
<div class="td" style="left:1657px">USD</div></div>
<div class="tr" style="top:352px"><div class="cb" style="top:15px"></div>
<div class="td lk" style="left:47px">TR#20250820001004</div>
<div class="td" style="left:287px">HH仓库 (HH123)</div>
<div class="td" style="left:447px">HH客户 (1011080)</div>
<div class="td" style="left:607px">入库</div>
<div class="td lk" style="left:767px">IB080250624RU</div>
<div class="td" style="left:937px">HH仓库销售1</div>
<div class="td" style="left:1077px">HH仓库销售1</div>
<div class="td" style="left:1217px">HH仓库客服</div>
<div class="td" style="left:1357px">HH仓库客服</div>
<div class="td" style="left:1540px;width:100px;text-align:right">5.0000</div>
<div class="td" style="left:1657px">USD</div></div>
<div class="tr" style="top:396px"><div class="cb" style="top:15px"></div>
<div class="td lk" style="left:47px">TR#20250819001008</div>
<div class="td" style="left:287px">HH仓库 (HH123)</div>
<div class="td" style="left:447px">HH客户 (1011080)</div>
<div class="td" style="left:607px">入库</div>
<div class="td lk" style="left:767px">IB080250819RT</div>
<div class="td" style="left:937px">HH仓库销售1</div>
<div class="td" style="left:1077px">HH仓库销售1</div>
<div class="td" style="left:1217px">HH仓库客服</div>
<div class="td" style="left:1357px">HH仓库客服</div>
<div class="td" style="left:1540px;width:100px;text-align:right">27.0000</div>
<div class="td" style="left:1657px">USD</div></div>
<div class="tr" style="top:440px"><div class="cb" style="top:15px"></div>
<div class="td lk" style="left:47px">TR#20250819001007</div>
<div class="td" style="left:287px">HH仓库 (HH123)</div>
<div class="td" style="left:447px">HH客户 (1011080)</div>
<div class="td" style="left:607px">入库</div>
<div class="td lk" style="left:767px">FRI0802508190RS</div>
<div class="td" style="left:937px">HH仓库销售1</div>
<div class="td" style="left:1077px">HH仓库销售1</div>
<div class="td" style="left:1217px">HH仓库客服</div>
<div class="td" style="left:1357px">HH仓库客服</div>
<div class="td" style="left:1540px;width:100px;text-align:right">0.0000</div>
<div class="td" style="left:1657px">USD</div></div>
<div class="tr" style="top:484px"><div class="cb" style="top:15px"></div>
<div class="td lk" style="left:47px">TR#20250819001006</div>
<div class="td" style="left:287px">HH仓库 (HH123)</div>
<div class="td" style="left:447px">HH客户 (1011080)</div>
<div class="td" style="left:607px">入库</div>
<div class="td lk" style="left:767px">IB080250819RS</div>
<div class="td" style="left:937px">HH仓库销售1</div>
<div class="td" style="left:1077px">HH仓库销售1</div>
<div class="td" style="left:1217px">HH仓库客服</div>
<div class="td" style="left:1357px">HH仓库客服</div>
<div class="td" style="left:1540px;width:100px;text-align:right">0.0000</div>
<div class="td" style="left:1657px">USD</div></div>
</div>
<div class="abs" style="left:1671px;top:39px;width:7px;height:530px;background:#f6f6f6"></div>
<div class="abs" style="left:1672px;top:39px;width:6px;height:321px;background:#d9d9d9;border-radius:3px"></div>
<div class="abs" style="left:0;top:569px;width:1679px;height:1px;background:#e8e8ec"></div>
<div class="abs" style="left:47px;top:570px;line-height:40px;font-weight:bold;color:#1a1a1a">总计</div>
<div class="abs" style="left:1540px;top:570px;width:100px;text-align:right;line-height:40px;font-weight:bold;color:#1a1a1a;letter-spacing:-0.100px">335841.1036</div>
<div class="abs" style="left:0;top:609px;width:1679px;height:10px;background:#eeeeee"></div>
<div class="abs" style="left:14px;top:612px;width:867px;height:6px;border-radius:3px;background:#c1c1c1"></div>
<svg class="abs" style="left:3px;top:612px" width="4" height="6" viewBox="0 0 4 6"><path d="M4 0 V6 L0 3 Z" fill="#a3a3a3"/></svg>
<svg class="abs" style="left:1669px;top:612px" width="4" height="6" viewBox="0 0 4 6"><path d="M0 0 V6 L4 3 Z" fill="#a3a3a3"/></svg>
<div class="abs" style="left:1151px;top:630px;line-height:32px;font-size:14px;color:#1f1f1f;letter-spacing:-0.200px">共289条</div>
<svg class="abs" style="left:1219px;top:641px" width="7" height="11" viewBox="0 0 7 11"><path d="M5.800 1 L1.500 5.500 L5.800 10" fill="none" stroke="#9a9da6" stroke-width="2"/></svg>
<div class="pg" style="left:1242px;background:#e4ecfd;color:#1a5bff">1</div>
<div class="pg" style="left:1278px">2</div>
<div class="pg" style="left:1314px">3</div>
<div class="pg" style="left:1350px">4</div>
<div class="pg" style="left:1386px">5</div>
<div class="pg" style="left:1422px">6</div>
<div class="pg" style="left:1458px;font-size:8px;letter-spacing:3px;text-indent:3px;line-height:34px">•••</div>
<div class="pg" style="left:1494px">15</div>
<svg class="abs" style="left:1542px;top:641px" width="7" height="11" viewBox="0 0 7 11"><path d="M1.200 1 L5.500 5.500 L1.200 10" fill="none" stroke="#3f3f4c" stroke-width="1.900"/></svg>
<div class="sel" style="left:1566px;top:628px;width:100px"><span class="val" style="left:18px;letter-spacing:-0.100px;line-height:36px">20条/页</span><svg class="chev" style="left:79px;right:auto;top:13px;color:#4a4a4a" width="9" height="9" viewBox="0 0 10 10"><path d="M1.500 3.200 L5 6.700 L8.500 3.200" fill="none" stroke="currentColor" stroke-width="1.600" stroke-linecap="round" stroke-linejoin="round"/></svg></div>
</div>
<div class="abs" style="left:503px;top:264px;width:80px;height:72px;background:#fff;border-radius:4px;box-shadow:0 3px 12px rgba(0,0,0,0.16),0 0 3px rgba(0,0,0,0.06);padding:4px 0"><div style="height:32px;line-height:32px;padding-left:12px;color:#333;font-size:14px">批量新增</div><div style="height:32px;line-height:32px;padding-left:12px;color:#333;font-size:14px">批量调整</div></div>
<div class="abs" style="left:491px;top:214px;width:104px;height:136px;border:6px solid #ed1c24;border-radius:3px"></div>
<div id="wmk">
<div class="wm" style="left:243px;top:127px">1011<br>zhangsan123</div>
<div class="wm" style="left:643px;top:127px">1011<br>zhangsan123</div>
<div class="wm" style="left:1043px;top:127px">1011<br>zhangsan123</div>
<div class="wm" style="left:1443px;top:127px">1011<br>zhangsan123</div>
<div class="wm" style="left:1843px;top:127px">1011<br>zhangsan123</div>
<div class="wm" style="left:243px;top:287px">1011<br>zhangsan123</div>
<div class="wm" style="left:643px;top:287px">1011<br>zhangsan123</div>
<div class="wm" style="left:1043px;top:287px">1011<br>zhangsan123</div>
<div class="wm" style="left:1443px;top:287px">1011<br>zhangsan123</div>
<div class="wm" style="left:1843px;top:287px">1011<br>zhangsan123</div>
<div class="wm" style="left:243px;top:447px">1011<br>zhangsan123</div>
<div class="wm" style="left:643px;top:447px">1011<br>zhangsan123</div>
<div class="wm" style="left:1043px;top:447px">1011<br>zhangsan123</div>
<div class="wm" style="left:1443px;top:447px">1011<br>zhangsan123</div>
<div class="wm" style="left:1843px;top:447px">1011<br>zhangsan123</div>
<div class="wm" style="left:243px;top:607px">1011<br>zhangsan123</div>
<div class="wm" style="left:643px;top:607px">1011<br>zhangsan123</div>
<div class="wm" style="left:1043px;top:607px">1011<br>zhangsan123</div>
<div class="wm" style="left:1443px;top:607px">1011<br>zhangsan123</div>
<div class="wm" style="left:1843px;top:607px">1011<br>zhangsan123</div>
<div class="wm" style="left:243px;top:767px">1011<br>zhangsan123</div>
<div class="wm" style="left:643px;top:767px">1011<br>zhangsan123</div>
<div class="wm" style="left:1043px;top:767px">1011<br>zhangsan123</div>
<div class="wm" style="left:1443px;top:767px">1011<br>zhangsan123</div>
<div class="wm" style="left:1843px;top:767px">1011<br>zhangsan123</div>
<div class="wm" style="left:243px;top:927px">1011<br>zhangsan123</div>
<div class="wm" style="left:643px;top:927px">1011<br>zhangsan123</div>
<div class="wm" style="left:1043px;top:927px">1011<br>zhangsan123</div>
<div class="wm" style="left:1443px;top:927px">1011<br>zhangsan123</div>
<div class="wm" style="left:1843px;top:927px">1011<br>zhangsan123</div>
</div>
</body></html>
